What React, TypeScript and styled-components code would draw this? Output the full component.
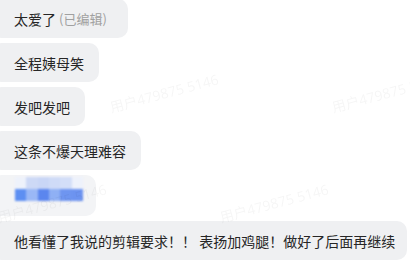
import styled, { createGlobalStyle } from 'styled-components';

const GlobalStyle = createGlobalStyle`
  html, body {
    margin: 0;
    padding: 0;
    background: #ffffff;
  }
  body {
    width: 410px;
    height: 260px;
    overflow: hidden;
    font-family: "Noto Sans CJK SC", "Noto Sans", sans-serif;
  }
`;

const messages: { text: string; edited?: boolean }[] = [
  { text: '太爱了', edited: true },
  { text: '全程姨母笑' },
  { text: '发吧发吧' },
  { text: '这条不爆天理难容' },
];

// 马赛克缩略图的色块
const mosaicTop = ['#eef2fb', '#cdd9f6', '#c9d6f6', '#cfdbf7', '#d3def8', '#eef2fb'];
const mosaicBand = ['#5d8ff2', '#9ab8f6', '#5b86ee', '#8fb0f4', '#6e95f0', '#6c93f0'];

const marks = [
  { x: 110, y: 105 },
  { x: 332, y: 105 },
  { x: -2, y: 215 },
  { x: 220, y: 215 },
];

export default function App() {
  return (
    <>
      <GlobalStyle />
      <Chat>
        {messages.map((m) => (
          <Bubble key={m.text}>
            {m.text}
            {m.edited && <Edited>(已编辑)</Edited>}
          </Bubble>
        ))}
        <ImageBubble>
          <Thumb>
            <MosaicRow $h={12}>
              {mosaicTop.map((c, i) => (
                <Cell key={i} style={{ background: c }} />
              ))}
            </MosaicRow>
            <MosaicRow $h={12}>
              {mosaicBand.map((c, i) => (
                <Cell key={i} style={{ background: c }} />
              ))}
            </MosaicRow>
          </Thumb>
        </ImageBubble>
        <Bubble $tight>他看懂了我说的剪辑要求！！ 表扬加鸡腿！做好了后面再继续</Bubble>
      </Chat>
      <Watermarks>
        {marks.map((p, i) => (
          <Mark key={i} style={{ left: p.x, top: p.y - 8 }}>
            用户479875 5146
          </Mark>
        ))}
      </Watermarks>
    </>
  );
}

const Chat = styled.div`
  display: flex;
  flex-direction: column;
  align-items: flex-start;
  gap: 5px;
  margin: -1px 0 0 -8px;
`;

const Bubble = styled.div<{ $tight?: boolean }>`
  display: flex;
  align-items: center;
  height: 39px;
  box-sizing: border-box;
  padding: 0 ${(p) => (p.$tight ? 12 : 15)}px 0 22px;
  border-radius: 10px;
  background: #eff0f2;
  color: #262626;
  font-size: 14px;
  white-space: nowrap;
`;

const Edited = styled.span`
  margin-left: 3px;
  margin-right: 6px;
  color: #a0a0a0;
  font-size: 13px;
`;

const ImageBubble = styled.div`
  height: 41px;
  box-sizing: border-box;
  padding: 2px 13px 0 23px;
  border-radius: 10px;
  background: #f3f4f6;
`;

const Thumb = styled.div`
  width: 68px;
  display: flex;
  flex-direction: column;
  filter: blur(1px);
`;

const MosaicRow = styled.div<{ $h: number }>`
  display: flex;
  height: ${(p) => p.$h}px;
`;

const Cell = styled.div`
  flex: 1;
`;

const Watermarks = styled.div`
  position: fixed;
  inset: 0;
  pointer-events: none;
  overflow: hidden;
`;

const Mark = styled.span`
  position: absolute;
  transform: rotate(-15deg);
  transform-origin: left center;
  font-family: "Open Sans", "Noto Sans CJK SC", sans-serif;
  font-size: 14px;
  color: rgba(0, 0, 0, 0.04);
  white-space: nowrap;
`;
